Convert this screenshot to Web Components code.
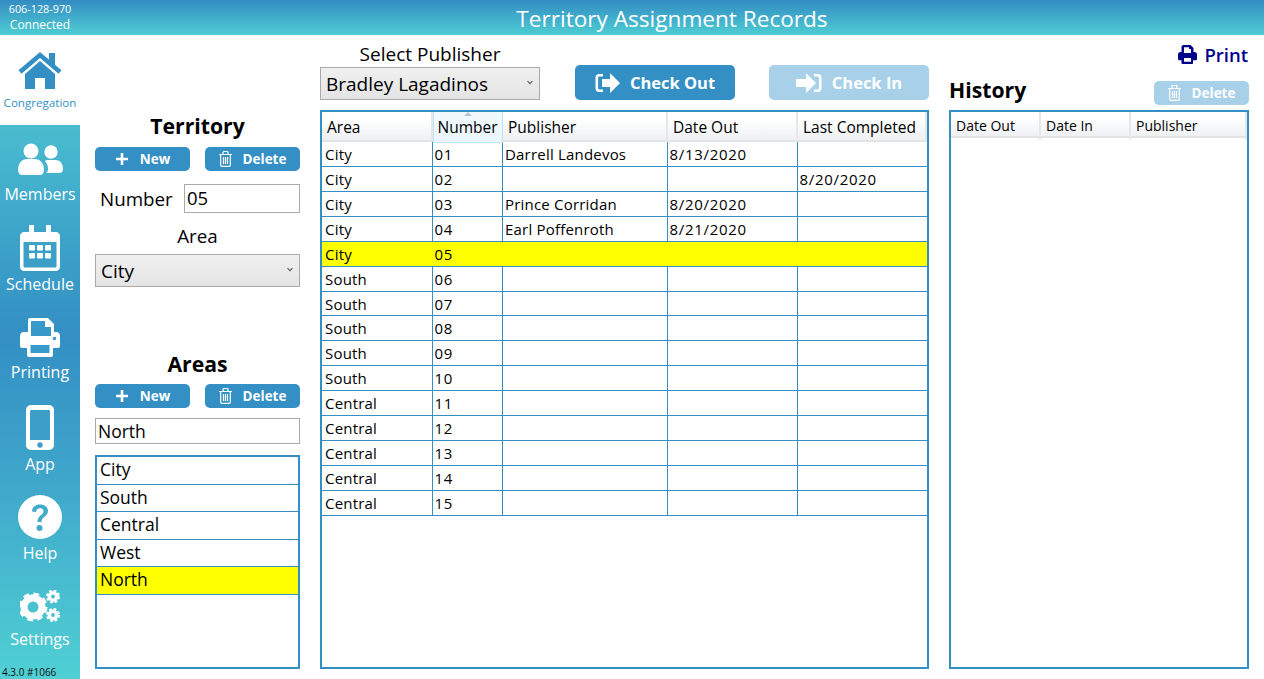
<!DOCTYPE html>
<html>
<head>
<meta charset="utf-8">
<title>Territory Assignment Records</title>
<style>
  html, body { margin: 0; height: 100%; overflow: hidden; background: #fff; }
  body { font-family: "Open Sans", "Noto Sans", sans-serif; color: #000; }
</style>
</head>
<body>
<app-shell>
  <app-header slot="header" phone="606-128-970" status="Connected" heading="Territory Assignment Records"></app-header>
  <side-nav slot="nav" version="4.3.0 #1066">
    <nav-item home label="Congregation">
      <svg width="46" height="37" viewBox="0 0 46 37" fill="#338fc4"><path d="M32 1h6v13l-6-5z"/><path d="M3 20 23 3l20 17" fill="none" stroke="#338fc4" stroke-width="4.5"/><path d="M8 22 23 9l15 13v15H28V26H18v11H8z"/></svg>
    </nav-item>
    <nav-item label="Members" style="--mt:18px;--gap:8px">
      <svg width="46" height="33" viewBox="0 0 46 33" fill="#fff"><circle cx="14" cy="8" r="7.5"/><path d="M1 27c0-7 4-11 9-11h8c5 0 9 4 9 11 0 3-2 5-4 5H5c-2 0-4-2-4-5z"/><circle cx="34" cy="9" r="6.7"/><path d="M29 30h13c2 0 4-1 4-4 0-6-3-9-8-9h-7c-1 0-2 0-3 1 2 2 3 5 3 8 0 1 0 3-2 4z"/></svg>
    </nav-item>
    <nav-item label="Schedule" style="--mt:21px;--gap:3px">
      <svg width="40" height="46" viewBox="0 0 40 46" fill="#fff"><path d="M9 0h5v7h12V0h5v7h5c2 0 4 2 4 4v31c0 2-2 4-4 4H4c-2 0-4-2-4-4V11c0-2 2-4 4-4h5zM3.500 17v24c0 1 .5 1.500 1.500 1.500h30c1 0 1.500-.5 1.500-1.500V17z"/><rect x="9" y="20" width="6" height="5.500" rx="1"/><rect x="17" y="20" width="6" height="5.500" rx="1"/><rect x="25" y="20" width="6" height="5.500" rx="1"/><rect x="9" y="28" width="6" height="5.500" rx="1"/><rect x="17" y="28" width="6" height="5.500" rx="1"/><rect x="25" y="28" width="6" height="5.500" rx="1"/></svg>
    </nav-item>
    <nav-item label="Printing" style="--mt:23px;--gap:5px">
      <svg width="40" height="40" viewBox="0 0 40 40" fill="#fff"><path d="M8 15V3q0-2 2-2h18l6 6v8h2q4 0 4 4v10q0 2-3 2h-4v7q0 2-2 2H9q-2 0-2-2v-7H3q-3 0-3-2V19q0-4 4-4z"/><path d="M11 4h14v6h6v9H11z" fill="#389ac8"/><path d="M10.500 28h19v8h-19z" fill="#389ac8"/><circle cx="34.500" cy="21.500" r="1.800" fill="#389ac8"/></svg>
    </nav-item>
    <nav-item label="App" style="--mt:23px;--gap:4px">
      <svg width="28" height="45" viewBox="0 0 28 45"><rect width="28" height="45" rx="5" fill="#fff"/><rect x="4" y="5" width="20" height="30" rx="1" fill="#3d9fc8"/><circle cx="14" cy="40" r="2.700" fill="#3d9fc8"/></svg>
    </nav-item>
    <nav-item label="Help" style="--mt:21px;--gap:4px">
      <svg width="44" height="44" viewBox="0 0 44 44"><circle cx="22" cy="22" r="22" fill="#fff"/><path d="M14 16.500c0-4.500 3.500-7 8-7 4.500 0 8 2.500 8 6.500 0 5.500-6.500 5.500-6.500 11h-4c0-7 6-7 6-10.500 0-2-1.500-3.200-3.500-3.200s-3.700 1.200-4 3.700z" fill="#42abcb"/><circle cx="21.500" cy="33" r="3" fill="#42abcb"/></svg>
    </nav-item>
    <nav-item label="Settings" style="--mt:27px;--gap:7px">
      <svg width="40" height="32" viewBox="0 0 40 32">
        <circle cx="13" cy="17" r="9" fill="none" stroke="#fff" stroke-width="7"/>
        <circle cx="13" cy="17" r="12.500" fill="none" stroke="#fff" stroke-width="4" stroke-dasharray="5.500 4.320"/>
        <circle cx="33" cy="6.500" r="3.700" fill="none" stroke="#fff" stroke-width="3.500"/>
        <circle cx="33" cy="6.500" r="6" fill="none" stroke="#fff" stroke-width="2" stroke-dasharray="2.700 2.010"/>
        <circle cx="33" cy="25" r="3.700" fill="none" stroke="#fff" stroke-width="3.500"/>
        <circle cx="33" cy="25" r="6" fill="none" stroke="#fff" stroke-width="2" stroke-dasharray="2.700 2.010"/>
      </svg>
    </nav-item>
  </side-nav>
  <territory-panel slot="left"></territory-panel>
  <publisher-panel slot="center"></publisher-panel>
  <history-panel slot="right"></history-panel>
</app-shell>

<script>
const BLUE = '#338fc4';

const ICONS = {
  plus: '<svg width="14" height="14" viewBox="0 0 14 14"><path d="M5.700 1h2.600v4.700H13v2.600H8.300V13H5.700V8.300H1V5.700h4.700z" fill="#fff"/></svg>',
  trash: '<svg width="13" height="16" viewBox="0 0 13 16" fill="none" stroke="#fff" stroke-width="1.200"><path d="M0 3.500h13M4 3.500V1.500c0-.5.500-1 1-1h3c.5 0 1 .5 1 1v2M1.700 3.500v10.500c0 .8.500 1.400 1.300 1.400h7c.8 0 1.300-.6 1.300-1.400V3.500M4.500 6v7M6.500 6v7M8.500 6v7"/></svg>',
  out: '<svg width="25" height="20" viewBox="0 0 25 20" fill="#fff"><path d="M8 1H4C2 1 .5 2.500.5 4.500v11C.5 17.500 2 19 4 19h4v-2.600H4.500c-.8 0-1.400-.6-1.400-1.400V5c0-.8.600-1.400 1.400-1.400H8z"/><path d="M15 0l10 10-10 10v-6H7V6h8z"/></svg>',
  in: '<svg width="26" height="20" viewBox="0 0 26 20" fill="#fff"><path d="M18 1h4c2 0 3.500 1.500 3.500 3.500v11c0 2-1.500 3.500-3.500 3.500h-4v-2.600h3.500c.8 0 1.400-.6 1.400-1.400V5c0-.8-.6-1.400-1.400-1.400H18z"/><path d="M10 0l10 10-10 10v-6H0V6h10z"/></svg>',
  printer: '<svg width="19" height="19" viewBox="0 0 19 19" fill="#00008b"><path d="M3.500 7V2c0-1 .8-2 2-2h7l3 3v4h1c1.500 0 2.500 1 2.500 2.500V14c0 .8-.5 1.200-1.200 1.200h-2.800V18c0 .6-.4 1-1 1H4.500c-.6 0-1-.4-1-1v-2.800H1.200C.5 15.200 0 14.800 0 14V9.500C0 8 1 7 2.500 7zM6 2.300V8h7V4h-2V2.300zM6 13v3.700h7V13z" fill-rule="evenodd"/></svg>'
};

class AppShell extends HTMLElement {
  constructor() {
    super();
    this.attachShadow({ mode: 'open' }).innerHTML = `
      <style>
        :host { display: flex; flex-direction: column; height: 679px; width: 1264px; }
        .body { display: flex; flex: 1; min-height: 0; }
        .main { display: flex; flex: 1; gap: 20px; padding: 0 15px 10px 15px; min-width: 0; }
        ::slotted([slot=left]) { width: 205px; }
        ::slotted([slot=center]) { width: 609px; }
        ::slotted([slot=right]) { width: 300px; }
      </style>
      <slot name="header"></slot>
      <div class="body">
        <slot name="nav"></slot>
        <div class="main">
          <slot name="left"></slot>
          <slot name="center"></slot>
          <slot name="right"></slot>
        </div>
      </div>`;
  }
}

class AppHeader extends HTMLElement {
  connectedCallback() {
    this.attachShadow({ mode: 'open' }).innerHTML = `
      <style>
        :host { display: flex; height: 35px; color: #fff; background: linear-gradient(#338cc3, #4ecdd3); }
        .conn { width: 80px; font-size: 12px; font-weight: 500; line-height: 16px; text-align: center; padding-top: 1px; white-space: nowrap; }
        .conn div:first-child { font-size: 10.800px; }
        h1 { flex: 1; margin: 0; font-size: 22.600px; font-weight: 400; line-height: 37px; text-align: center; }
      </style>
      <div class="conn"><div>${this.getAttribute('phone')}</div><div>${this.getAttribute('status')}</div></div>
      <h1>${this.getAttribute('heading')}</h1>`;
  }
}

class SideNav extends HTMLElement {
  connectedCallback() {
    this.attachShadow({ mode: 'open' }).innerHTML = `
      <style>
        :host { display: flex; flex-direction: column; width: 80px; flex: none; }
        .rail { flex: 1; display: flex; flex-direction: column; background: linear-gradient(#49bccf 0%, #338fc4 38%, #3ea4ca 62%, #50d0d4 100%); }
        .ver { font-size: 10px; height: 14px; line-height: 14px; padding-left: 2px; color: #111; }
        .items { flex: 1; display: flex; flex-direction: column; }
      </style>
      <slot name="top"></slot>
      <div class="rail">
        <div class="items"><slot></slot></div>
        <div class="ver">${this.getAttribute('version')}</div>
      </div>`;
    this.querySelector('[home]').slot = 'top';
  }
}

class NavItem extends HTMLElement {
  connectedCallback() {
    this.attachShadow({ mode: 'open' }).innerHTML = `
      <style>
        :host { display: flex; flex-direction: column; align-items: center; flex: none; margin-top: var(--mt, 0); color: #fff; font-size: 16px; line-height: 20px; }
        :host([home]) { height: 90px; color: ${BLUE}; font-size: 11.600px; line-height: 14px; padding-top: 17px; box-sizing: border-box; --gap: 7px; }
        .lbl { margin-top: var(--gap); white-space: nowrap; }
        ::slotted(svg) { display: block; }
      </style>
      <slot></slot><div class="lbl">${this.getAttribute('label')}</div>`;
  }
}

class ActionButton extends HTMLElement {
  connectedCallback() {
    this.attachShadow({ mode: 'open' }).innerHTML = `
      <style>
        :host { display: flex; align-items: center; justify-content: center; box-sizing: border-box; height: 24px; border-radius: 5px; background: ${BLUE}; color: #fff; font-size: 13.500px; font-weight: 700; gap: 11px; }
        :host([big]) { height: 35px; font-size: 16.500px; gap: 10px; }
        :host([off]) { background: #a8d1e9; }
        span { line-height: 1; padding-top: 1px; }
        svg { display: block; }
      </style>
      ${ICONS[this.getAttribute('icon')]}<span><slot></slot></span>`;
  }
}

class TextField extends HTMLElement {
  connectedCallback() {
    this.attachShadow({ mode: 'open' }).innerHTML = `
      <style>
        :host { display: block; box-sizing: border-box; border: 1px solid #aaa; background: #fff; font-size: 18.500px; line-height: 1; padding: 0 2px; }
        div { display: flex; align-items: center; height: 100%; }
      </style><div><slot></slot></div>`;
  }
}

class DropSelect extends HTMLElement {
  connectedCallback() {
    this.attachShadow({ mode: 'open' }).innerHTML = `
      <style>
        :host { display: flex; align-items: center; justify-content: space-between; box-sizing: border-box; border: 1px solid #aaa; background: linear-gradient(#f0f0f0, #e4e4e4); font-size: 19px; padding: 0 6px 0 5px; }
        svg { display: block; margin-bottom: 2px; }
      </style>
      <span><slot></slot></span>
      <svg width="6" height="5" viewBox="0 0 6 5"><path d="M.5 1 3 3.700 5.500 1" fill="none" stroke="#555" stroke-width="1.100"/></svg>`;
  }
}

class PickList extends HTMLElement {
  set items(list) {
    this.shadowRoot.querySelector('.list').innerHTML = list.map(i =>
      `<div class="item${i === this.getAttribute('selected') ? ' sel' : ''}">${i}</div>`).join('');
  }
  constructor() {
    super();
    this.attachShadow({ mode: 'open' }).innerHTML = `
      <style>
        :host { display: block; box-sizing: border-box; border: 2px solid ${BLUE}; background: #fff; }
        .item { box-sizing: border-box; height: 27.500px; line-height: 25.500px; padding-left: 3px; font-size: 17.500px; border-bottom: 1px solid ${BLUE}; }
        .sel { background: #ff0; }
      </style>
      <div class="list"></div>`;
  }
}

class DataGrid extends HTMLElement {
  constructor() {
    super();
    this.attachShadow({ mode: 'open' }).innerHTML = `
      <style>
        :host { display: block; box-sizing: border-box; border: 2px solid ${BLUE}; background: #fff; font-size: 15px; overflow: hidden; }
        .row { display: grid; grid-template-columns: var(--cols); }
        .head { height: var(--head-h, 30px); font-size: var(--head-size, 15.500px); background: linear-gradient(#fff 0%, #fff 25%, #eef0f3 100%); border-bottom: 2px solid #e2e3e5; box-sizing: border-box; }
        .hc { padding: 0 0 0 5px; line-height: var(--head-line, 30px); border-right: 2px solid #e6e7e9; position: relative; white-space: nowrap; box-sizing: border-box; }
        .hc.sorted { background: linear-gradient(#f2fafd, #eaf6fc); border: 1px solid #bfe3f5; border-top: 0; padding-left: 3.500px; margin-bottom: -1px; }
        .hc.sorted::before { content: ""; position: absolute; top: 0; left: 50%; margin-left: -4px; border: 4px solid transparent; border-top: 0; border-bottom: 4px solid #b4c6d6; }
        .body .row { height: 24.930px; box-sizing: border-box; border-bottom: 1px solid ${BLUE}; }
        .c { padding-left: 2px; line-height: 24.500px; letter-spacing: .2px; border-right: 1px solid ${BLUE}; white-space: nowrap; box-sizing: border-box; }
        .c:first-child { padding-left: 3px; }
        .c.num { letter-spacing: .7px; padding-left: 1.500px; }
        .row > .c:last-child { border-right: 0; }
        .row.sel { background: #ff0; }
        .row.sel .c { border-right-color: transparent; }
      </style>
      <div class="row head"></div>
      <div class="body"></div>`;
  }
  set columns(list) {
    this.shadowRoot.querySelector('.head').innerHTML = list.map((c, i) =>
      `<div class="hc${String(i) === this.getAttribute('sorted') ? ' sorted' : ''}">${c}</div>`).join('');
  }
  set rows(list) {
    const sel = this.getAttribute('selected');
    this.shadowRoot.querySelector('.body').innerHTML = list.map(r =>
      `<div class="row${r[1] === sel ? ' sel' : ''}">${r.map(v => `<div class="c${/^\d/.test(v) ? ' num' : ''}">${v}</div>`).join('')}</div>`).join('');
  }
}

class TerritoryPanel extends HTMLElement {
  connectedCallback() {
    this.attachShadow({ mode: 'open' }).innerHTML = `
      <style>
        :host { display: flex; flex-direction: column; font-size: 18.800px; }
        h2 { margin: 0; text-align: center; font-size: 21.200px; font-weight: 700; line-height: 28px; }
        .btns { display: flex; justify-content: space-between; margin-top: 7px; }
        .t + .btns { margin-top: 6px; }
        .btns action-button { width: 95px; }
        .num { display: flex; align-items: center; justify-content: space-between; margin-top: 13px; height: 29px; padding-left: 5px; }
        .num text-field { width: 116px; height: 29px; }
        .lbl { text-align: center; line-height: 24px; margin-top: 11px; }
        drop-select { height: 33px; margin-top: 6px; }
        .t { margin-top: 63px; }
        .area { height: 26px; margin-top: 10px; font-size: 17.500px; padding-top: 1px; }
        pick-list { margin-top: 11px; flex: 1; }
      </style>
      <h2 style="margin-top:77px">Territory</h2>
      <div class="btns"><action-button icon="plus">New</action-button><action-button icon="trash">Delete</action-button></div>
      <div class="num"><span>Number</span><text-field>05</text-field></div>
      <div class="lbl">Area</div>
      <drop-select>City</drop-select>
      <h2 class="t">Areas</h2>
      <div class="btns"><action-button icon="plus">New</action-button><action-button icon="trash">Delete</action-button></div>
      <text-field class="area">North</text-field>
      <pick-list selected="North"></pick-list>`;
    this.shadowRoot.querySelector('pick-list').items = ['City', 'South', 'Central', 'West', 'North'];
  }
}

class PublisherPanel extends HTMLElement {
  connectedCallback() {
    this.attachShadow({ mode: 'open' }).innerHTML = `
      <style>
        :host { display: flex; flex-direction: column; --cols: 111px 70px 165px 130px 129px; }
        .top { display: flex; align-items: flex-end; height: 65px; margin-bottom: 10px; }
        .pick { width: 220px; }
        .cap { text-align: center; font-size: 19px; line-height: 24px; margin-bottom: 1px; }
        drop-select { height: 33px; }
        action-button { width: 160px; }
        .co { margin-left: 35px; }
        .ci { margin-left: 34px; }
        data-grid { flex: 1; min-height: 0; }
      </style>
      <div class="top">
        <div class="pick"><div class="cap">Select Publisher</div><drop-select>Bradley Lagadinos</drop-select></div>
        <action-button big class="co" icon="out">Check Out</action-button>
        <action-button big off class="ci" icon="in">Check In</action-button>
      </div>
      <data-grid sorted="1" selected="05"></data-grid>`;
    const grid = this.shadowRoot.querySelector('data-grid');
    grid.columns = ['Area', 'Number', 'Publisher', 'Date Out', 'Last Completed'];
    const named = {
      '01': ['Darrell Landevos', '8/13/2020', ''],
      '02': ['', '', '8/20/2020'],
      '03': ['Prince Corridan', '8/20/2020', ''],
      '04': ['Earl Poffenroth', '8/21/2020', '']
    };
    const rows = [];
    for (let n = 1; n <= 15; n++) {
      const num = String(n).padStart(2, '0');
      const area = n <= 5 ? 'City' : n <= 10 ? 'South' : 'Central';
      rows.push([area, num, ...(named[num] || ['', '', ''])]);
    }
    grid.rows = rows;
  }
}

class HistoryPanel extends HTMLElement {
  connectedCallback() {
    this.attachShadow({ mode: 'open' }).innerHTML = `
      <style>
        :host { display: flex; flex-direction: column; --cols: 90px 90px 1fr; --head-h: 26px; --head-size: 14px; --head-line: 28px; }
        .print { display: flex; justify-content: flex-end; align-items: center; gap: 7px; height: 38px; color: #00008b; font-size: 18.500px; font-weight: 600; padding-right: 1px; }
        .print svg { display: block; }
        .bar { display: flex; justify-content: space-between; align-items: flex-end; height: 32px; margin-bottom: 5px; }
        h2 { margin: 0; font-size: 21.200px; font-weight: 700; line-height: 30px; }
        action-button { width: 95px; }
        data-grid { flex: 1; min-height: 0; }
      </style>
      <div class="print">${ICONS.printer}<span>Print</span></div>
      <div class="bar"><h2>History</h2><action-button off icon="trash">Delete</action-button></div>
      <data-grid></data-grid>`;
    this.shadowRoot.querySelector('data-grid').columns = ['Date Out', 'Date In', 'Publisher'];
  }
}

customElements.define('app-shell', AppShell);
customElements.define('app-header', AppHeader);
customElements.define('side-nav', SideNav);
customElements.define('nav-item', NavItem);
customElements.define('action-button', ActionButton);
customElements.define('text-field', TextField);
customElements.define('drop-select', DropSelect);
customElements.define('pick-list', PickList);
customElements.define('data-grid', DataGrid);
customElements.define('territory-panel', TerritoryPanel);
customElements.define('publisher-panel', PublisherPanel);
customElements.define('history-panel', HistoryPanel);
</script>
</body>
</html>
